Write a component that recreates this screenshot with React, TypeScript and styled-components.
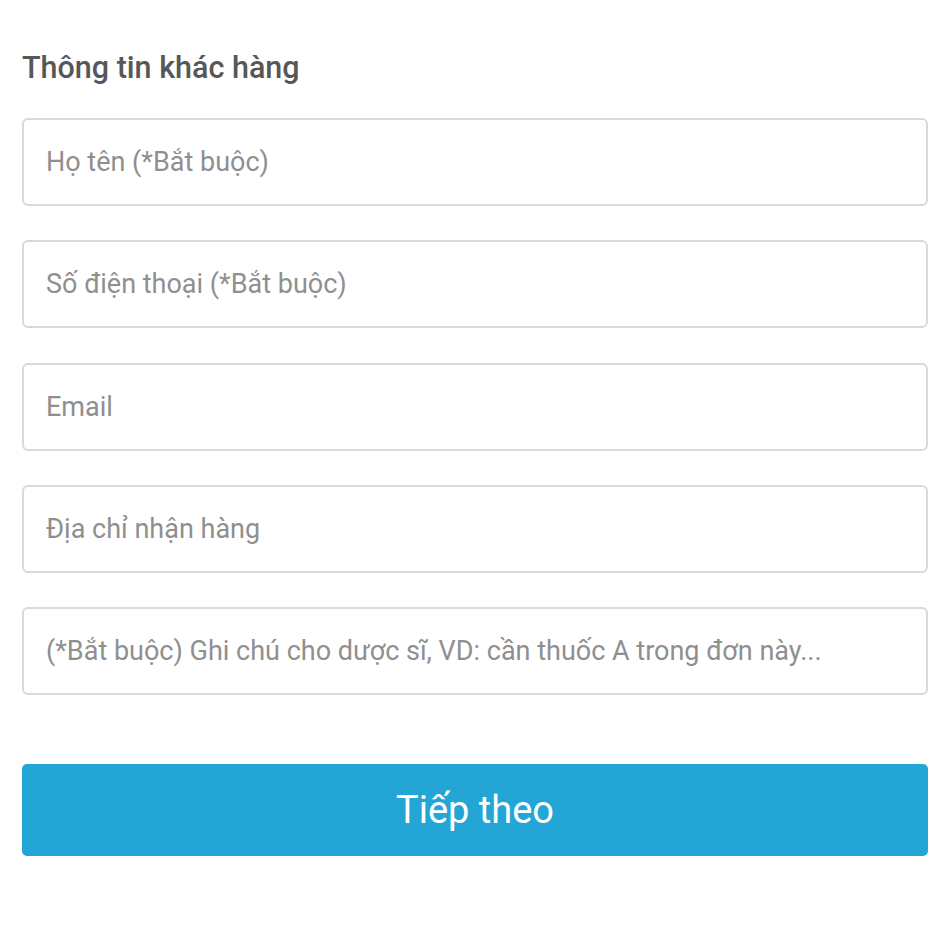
import styled, { createGlobalStyle } from 'styled-components';

const GlobalStyle = createGlobalStyle`
  html, body {
    margin: 0;
    padding: 0;
    background: #ffffff;
  }

  body {
    font-family: Roboto, 'Liberation Sans', sans-serif;
  }

  * {
    box-sizing: border-box;
  }
`;

const fields = [
  'Họ tên (*Bắt buộc)',
  'Số điện thoại (*Bắt buộc)',
  'Email',
  'Địa chỉ nhận hàng',
  '(*Bắt buộc) Ghi chú cho dược sĩ, VD: cần thuốc A trong đơn này...',
];

const App = () => {
  return (
    <>
      <GlobalStyle />
      <Form onSubmit={(e) => e.preventDefault()}>
        <Title>Thông tin khác hàng</Title>
        <Fields>
          {fields.map((placeholder) => (
            <Input key={placeholder} type="text" placeholder={placeholder} />
          ))}
        </Fields>
        <SubmitButton type="submit">Tiếp theo</SubmitButton>
      </Form>
    </>
  );
};

export default App;

const Form = styled.form`
  display: flex;
  flex-direction: column;
  padding: 48px 22px 40px;
  width: 950px;
`;

const Title = styled.h2`
  margin: 0 0 30px;
  color: #575757;
  font-size: 30.5px;
  font-weight: 500;
  line-height: 40px;
`;

const Fields = styled.div`
  display: flex;
  flex-direction: column;
  gap: 34.25px;
`;

const Input = styled.input`
  height: 88px;
  width: 100%;
  padding: 0 22px;
  border: 2px solid #d9d9d9;
  border-radius: 6px;
  background: #ffffff;
  color: #444444;
  font-family: Roboto, 'Liberation Sans', sans-serif;
  font-size: 27px;
  outline: none;

  &::placeholder {
    color: #8f8f8f;
  }
`;

const SubmitButton = styled.button`
  margin-top: 69px;
  height: 92px;
  width: 100%;
  border: none;
  border-radius: 5px;
  background: #23a6d5;
  color: #ffffff;
  font-family: Roboto, 'Liberation Sans', sans-serif;
  font-size: 38px;
  cursor: pointer;
`;
